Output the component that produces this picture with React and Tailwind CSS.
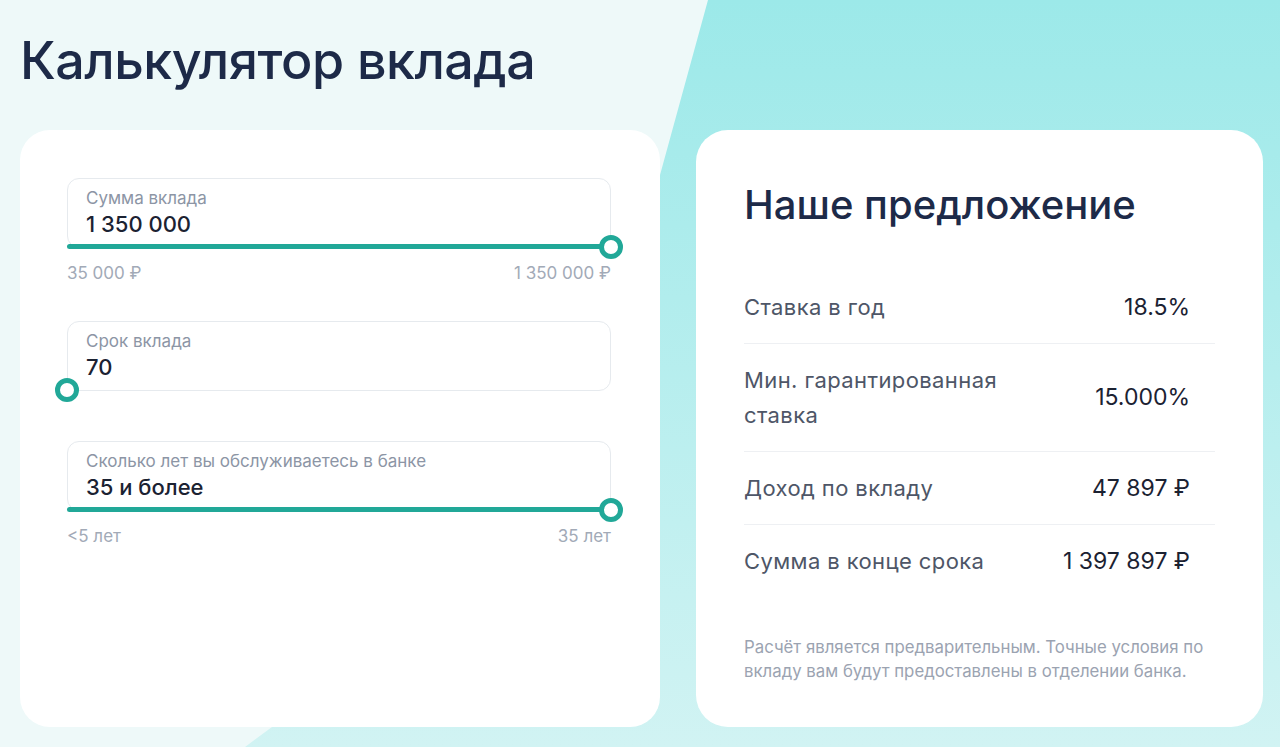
import React from 'react';

const font = { fontFamily: 'Inter, "Noto Sans", sans-serif' };

function Slider({ label, value, percent, min, max }) {
  return (
    <div>
      <div className="relative h-[70px] rounded-[12px] border border-[#e6eaee] bg-white px-[18px] pt-[8px]">
        <div className="text-[17px] leading-[22px] text-[#8c95a5]">{label}</div>
        <div className="text-[22px] font-medium leading-[30px] text-[#1b2232]">{value}</div>
        <div className="absolute -left-px -right-px bottom-[-2px] h-[5px]">
          <div className="h-full rounded-full bg-[#21a898]" style={{ width: `${percent}%` }} />
          <div
            className="absolute top-1/2 h-[24px] w-[24px] -translate-x-1/2 -translate-y-1/2 rounded-full border-[5px] border-[#21a898] bg-white"
            style={{ left: `${percent}%` }}
          />
        </div>
      </div>
      {min ? (
        <div className="mt-[15px] flex justify-between text-[17px] leading-[20px] text-[#a2aab7]">
          <span>{min}</span>
          <span>{max}</span>
        </div>
      ) : null}
    </div>
  );
}

const rows = [
  { label: 'Ставка в год', value: '18.5%' },
  { label: ['Мин. гарантированная', 'ставка'], value: '15.000%' },
  { label: 'Доход по вкладу', value: '47 897 ₽' },
  { label: 'Сумма в конце срока', value: '1 397 897 ₽' },
];

export default function App() {
  return (
    <div className="relative h-[747px] w-[1280px] overflow-hidden bg-[#eef9f9]" style={font}>
      <svg className="absolute inset-0" width="1280" height="747" viewBox="0 0 1280 747">
        <defs>
          <linearGradient id="tl" x1="0" y1="0" x2="0" y2="1">
            <stop offset="0" stopColor="#9ce9e9" />
            <stop offset="1" stopColor="#d1f3f3" />
          </linearGradient>
        </defs>
        <path d="M708 0 L1280 0 L1280 747 L245 747 L272 727 C420 560 600 360 660 175 Z" fill="url(#tl)" />
      </svg>

      <div className="relative pl-[20px]">
        <h1 className="pt-[28px] text-[52px] font-medium leading-[66px] tracking-[-0.5px] text-[#1d2a48]">
          Калькулятор вклада
        </h1>

        <div className="mt-[36px] flex gap-[36px]">
          <div className="h-[597px] w-[640px] shrink-0 rounded-[30px] bg-white pl-[47px] pr-[49px] pt-[48px]">
            <Slider label="Сумма вклада" value="1 350 000" percent={100} min="35 000 ₽" max="1 350 000 ₽" />
            <div className="mt-[38px]">
              <Slider label="Срок вклада" value="70" percent={0} />
            </div>
            <div className="mt-[50px]">
              <Slider
                label="Сколько лет вы обслуживаетесь в банке"
                value="35 и более"
                percent={100}
                min="<5 лет"
                max="35 лет"
              />
            </div>
          </div>

          <div className="h-[597px] w-[567px] shrink-0 rounded-[32px] bg-white px-[48px] pt-[52px]">
            <h2 className="text-[40px] font-medium leading-[46px] text-[#1d2a48]">Наше предложение</h2>
            <div className="mt-[43px]">
              {rows.map((row, i) => (
                <div
                  key={i}
                  className={`flex items-center justify-between py-[18.5px] ${i < rows.length - 1 ? 'border-b border-[#eef0f3]' : ''}`}
                >
                  <div className="text-[22px] leading-[35px] tracking-[0.4px] text-[#4e5667]">
                    {Array.isArray(row.label) ? row.label.map((l) => <div key={l}>{l}</div>) : row.label}
                  </div>
                  <div className="pr-[25px] text-[23px] leading-[35px] text-[#1b2232]">{row.value}</div>
                </div>
              ))}
            </div>
            <p className="mt-[38px] text-[16.8px] leading-[24px] text-[#9ba3b1]">
              Расчёт является предварительным. Точные условия по
              <br />
              вкладу вам будут предоставлены в отделении банка.
            </p>
          </div>
        </div>
      </div>
    </div>
  );
}
